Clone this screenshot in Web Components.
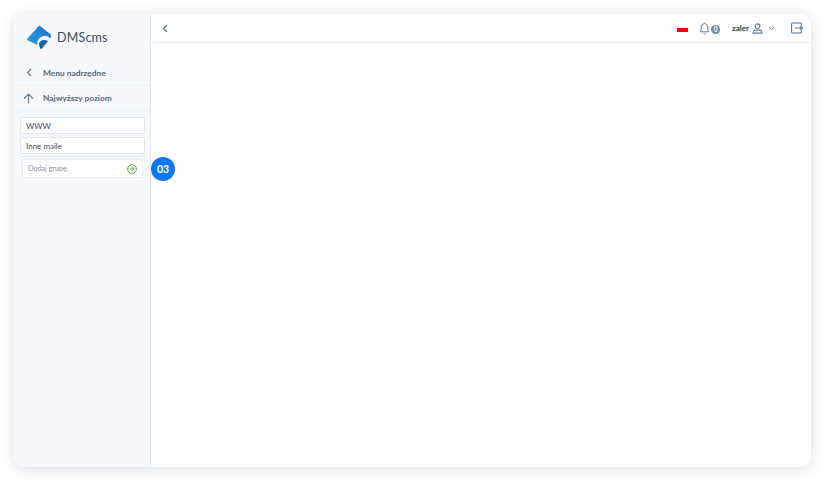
<!DOCTYPE html>
<html lang="pl">
<head>
<meta charset="utf-8">
<title>DMScms</title>
<style>
    html, body { margin: 0; height: 100%; background: #fff; }
    body { font-family: Lato, "Noto Sans", sans-serif; color: #3f4a5a; }
    dms-app { position: absolute; left: 14px; top: 14px; width: 797px; height: 453px; }
</style>
</head>
<body>

<template id="app-template">
    <style>
        :host {
            display: flex;
            background: #fff;
            border-radius: 11px;
            box-shadow: 0 2px 14px rgba(60, 70, 90, .18);
            overflow: hidden;
        }
        .main { flex: 1; display: flex; flex-direction: column; min-width: 0; }
        .content { flex: 1; }
    </style>
    <slot name="side"></slot>
    <div class="main">
        <slot name="top"></slot>
        <div class="content"><slot></slot></div>
    </div>
</template>

<template id="sidebar-template">
    <style>
        :host {
            display: flex;
            flex-direction: column;
            width: 136px;
            flex: none;
            background: #f6f8fb;
            border-right: 1px solid #dfe7f1;
        }
        .logo {
            display: flex;
            align-items: center;
            gap: 5px;
            height: 46px;
            padding: 0 0 0 12px;
            font-size: 12.5px;
            color: #3d4a58;
            letter-spacing: .2px;
        }
        .logo svg { display: block; }
        .groups {
            display: flex;
            flex-direction: column;
            gap: 3px;
            padding: 6px 5px 0 6px;
        }
    </style>
    <div class="logo">
        <svg width="26" height="26" viewBox="0 0 26 26">
            <defs>
                <linearGradient id="logo-grad" x1="0" y1="1" x2="1" y2="0">
                    <stop offset="0" stop-color="#2b9be3"/>
                    <stop offset="1" stop-color="#1f74c6"/>
                </linearGradient>
            </defs>
            <path d="M12.300 2.500 Q13.300 1.300 14.400 2.200 L24.600 10.200 Q25.500 11 24.900 12.100 L24.500 14.500 A7.500 7.500 0 0 0 11.500 21 L2 16.600 Q.7 15.800 1.500 14.500 Z" fill="url(#logo-grad)"/>
            <path d="M13 20 C13 16.500 18 14.500 22 17 L16 24.500 Q15 25.500 14.300 24.500 C14 23 13 22 13 20 Z" fill="#1a62b4"/>
        </svg>
        <span>DMScms</span>
    </div>
    <slot name="nav"></slot>
    <div class="groups"><slot></slot></div>
</template>

<template id="nav-template">
    <style>
        :host {
            display: flex;
            align-items: center;
            height: 25px;
            border-bottom: 1px solid #edf0f4;
            font-size: 8.400px;
            font-weight: 700;
            color: #5a6675;
        }
        :host(:last-of-type) { height: 24px; }
        .icon { width: 29px; display: flex; justify-content: center; flex: none; }
        svg { display: block; }
    </style>
    <span class="icon"><slot name="icon"></slot></span>
    <slot></slot>
</template>

<template id="group-template">
    <style>
        :host {
            display: flex;
            align-items: center;
            box-sizing: border-box;
            height: 17px;
            padding: 0 5px;
            background: #fff;
            border: 1px solid #dfe6ee;
            border-radius: 2px;
            font-size: 8px;
            color: #3f4a5a;
        }
    </style>
    <slot></slot>
</template>

<template id="add-template">
    <style>
        :host {
            display: block;
            margin-top: -1px;
            padding: 2px 2px 0 2px;
            border-top: 1px solid #e6eaef;
        }
        .box {
            display: flex;
            align-items: center;
            justify-content: space-between;
            box-sizing: border-box;
            height: 19px;
            padding: 0 5px;
            background: #fff;
            border: 1px solid #e9edf2;
            border-radius: 3px;
            font-size: 7.200px;
            color: #8b939e;
        }
        svg { display: block; }
    </style>
    <div class="box">
        <slot></slot>
        <svg width="10" height="10" viewBox="0 0 10 10" fill="none" stroke="#4fa83d" stroke-width="1">
            <circle cx="5" cy="5" r="4.300"/>
            <path d="M2.800 5h4.400M5.300 3l2 2-2 2"/>
        </svg>
    </div>
</template>

<template id="topbar-template">
    <style>
        :host {
            display: flex;
            align-items: center;
            box-sizing: border-box;
            height: 29px;
            flex: none;
            padding: 0 8px 0 11px;
            border-bottom: 1px solid #e9edf1;
            background: #fff;
        }
        svg { display: block; }
        .spacer { flex: 1; }
        .flag { width: 11px; height: 4px; background: #f00012; margin: 4px 0 0 0; }
        .bell { margin-left: 11px; }
        .count {
            width: 9px; height: 9px; border-radius: 50%;
            background: #76869a; color: #fff;
            font-size: 6.500px; font-weight: 700; line-height: 9px; text-align: center;
            margin: 2px 0 0 1px;
        }
        .user { margin-left: 12px; font-size: 8px; font-weight: 700; color: #2e3640; }
        .person { margin-left: 3px; }
        .caret { margin-left: 5px; }
        .logout { margin-left: 16px; }
    </style>
    <svg width="6" height="9" viewBox="0 0 6 9" fill="none" stroke="#5f7186" stroke-width="1.300"><path d="M5 1 1.500 4.500 5 8"/></svg>
    <span class="spacer"></span>
    <span class="flag"></span>
    <svg class="bell" width="11" height="13" viewBox="0 0 11 13" fill="none" stroke="#6c7d91" stroke-width="1"><path d="M1 9.800c1-1 1.200-2 1.200-4.200C2.200 3.400 3.600 1.600 5.500 1.600S8.800 3.400 8.800 5.600c0 2.200.2 3.200 1.200 4.200Z"/><path d="M4.300 11.300a1.300 1.300 0 0 0 2.400 0M5.500 1.600V.6"/></svg>
    <span class="count">0</span>
    <span class="user">zaler</span>
    <svg class="person" width="11" height="11" viewBox="0 0 12 12" fill="none" stroke="#6c7d91" stroke-width="1.200"><circle cx="6" cy="3.500" r="2.500"/><path d="M1.200 11c0-2.200 1.500-3.200 3-3.200h3.600c1.500 0 3 1 3 3.200Z"/></svg>
    <svg class="caret" width="7" height="5" viewBox="0 0 7 5" fill="none" stroke="#77879a" stroke-width="1"><path d="M1 1l2.500 2.500L6 1"/></svg>
    <svg class="logout" width="12" height="12" viewBox="0 0 12 12" fill="none" stroke="#5f7186" stroke-width="1.100"><path d="M10.500 3.500V2a1 1 0 0 0-1-1H1.600a1 1 0 0 0-1 1v8a1 1 0 0 0 1 1h7.900a1 1 0 0 0 1-1V8.500"/><path d="M4 6h7.400M9 3.800 11.400 6 9 8.200"/></svg>
</template>

<template id="step-template">
    <style>
        :host {
            position: absolute;
            left: 137px;
            top: 143px;
            width: 24px;
            height: 24px;
            border-radius: 50%;
            background: #0a78f5;
            color: #fff;
            font-size: 10.500px;
            font-weight: 700;
            display: flex;
            align-items: center;
            justify-content: center;
        }
    </style>
    <slot></slot>
</template>

<dms-app>
    <dms-sidebar slot="side">
        <dms-nav slot="nav">
            <svg slot="icon" width="6" height="9" viewBox="0 0 6 9" fill="none" stroke="#65768a" stroke-width="1.100"><path d="M5 1 1.500 4.500 5 8"/></svg>
            Menu nadrzędne
        </dms-nav>
        <dms-nav slot="nav">
            <svg slot="icon" width="11" height="11" viewBox="0 0 11 11" fill="none" stroke="#65768a" stroke-width="1.100"><path d="M5.500 10.500V1M1 5.500l4.500-4.500 4.500 4.500"/></svg>
            Najwyższy poziom
        </dms-nav>
        <dms-group>WWW</dms-group>
        <dms-group>Inne maile</dms-group>
        <dms-add>Dodaj grupę</dms-add>
    </dms-sidebar>
    <dms-topbar slot="top"></dms-topbar>
    <dms-step>03</dms-step>
</dms-app>

<script>
    // every element just clones its template into an open shadow root
    const simple = {
        "dms-app": "app-template",
        "dms-sidebar": "sidebar-template",
        "dms-nav": "nav-template",
        "dms-group": "group-template",
        "dms-add": "add-template",
        "dms-topbar": "topbar-template",
        "dms-step": "step-template",
    };

    for (const [name, templateId] of Object.entries(simple)) {
        window.customElements.define(name, class extends HTMLElement {
            constructor() {
                super();
                this.attachShadow({ mode: "open" });
                const template = document.getElementById(templateId);
                this.shadowRoot.appendChild(template.content.cloneNode(true));
            }
        });
    }
</script>
</body>
</html>
